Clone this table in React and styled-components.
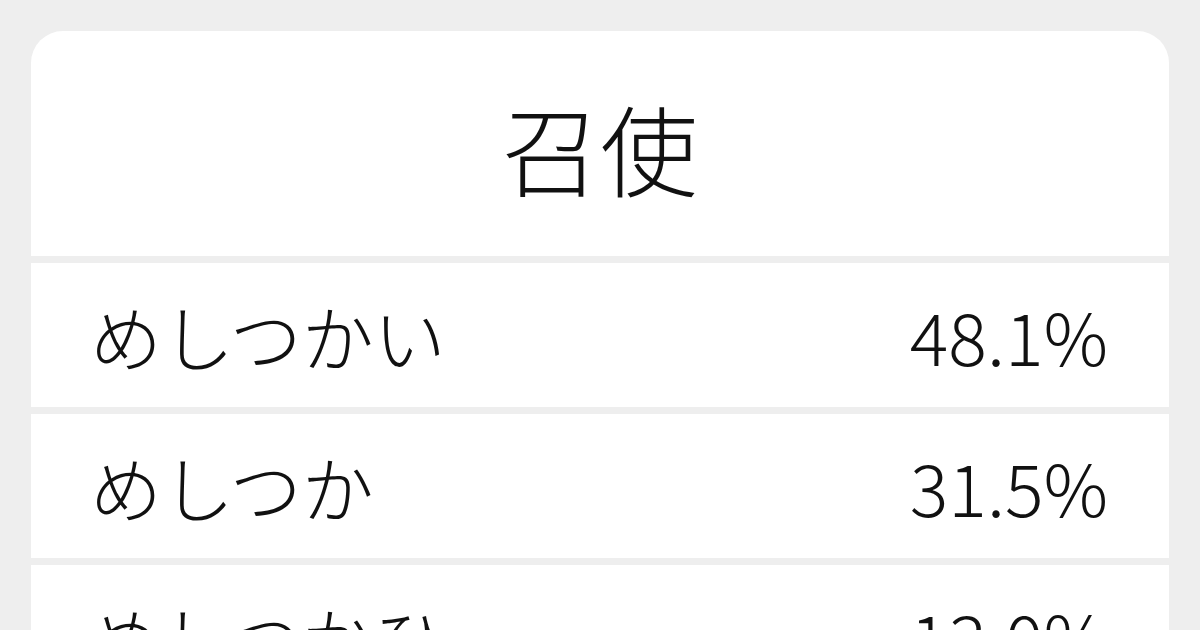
import styled, { createGlobalStyle } from "styled-components";

const readings = [
  { id: 1, kana: "めしつかい", ratio: "48.1%" },
  { id: 2, kana: "めしつか", ratio: "31.5%" },
  { id: 3, kana: "めしつかひ", ratio: "13.0%" },
];

const GlobalStyle = createGlobalStyle`
  html, body {
    margin: 0;
    padding: 0;
    background: #eeeeee;
    overflow: hidden;
  }
  body {
    font-family: "Noto Sans CJK JP", "Noto Sans", sans-serif;
    color: #111111;
  }
`;

const Page = styled.main`
  width: 1200px;
  height: 630px;
  box-sizing: border-box;
  padding: 31px 31px 0;
  overflow: hidden;
`;

const Card = styled.section`
  display: flex;
  flex-direction: column;
  gap: 7px;
  border-radius: 32px 32px 0 0;
  overflow: hidden;
  background: #eeeeee;
`;

const Heading = styled.h1`
  margin: 0;
  height: 225px;
  display: flex;
  align-items: center;
  justify-content: center;
  background: #ffffff;
  font-size: 98px;
  font-weight: 300;
  padding-top: 4px;
  box-sizing: border-box;
`;

const Row = styled.div`
  height: 144px;
  display: flex;
  align-items: center;
  justify-content: space-between;
  padding: 0 61px 0 59px;
  background: #ffffff;
  font-size: 72px;
  font-weight: 300;
  line-height: 1;
`;

const Kana = styled.span``;

const Ratio = styled.span``;

const App = () => {
  return (
    <>
      <GlobalStyle />
      <Page>
        <Card>
          <Heading>召使</Heading>
          {readings.map(({ id, kana, ratio }) => (
            <Row key={id}>
              <Kana>{kana}</Kana>
              <Ratio>{ratio}</Ratio>
            </Row>
          ))}
        </Card>
      </Page>
    </>
  );
};

export default App;
